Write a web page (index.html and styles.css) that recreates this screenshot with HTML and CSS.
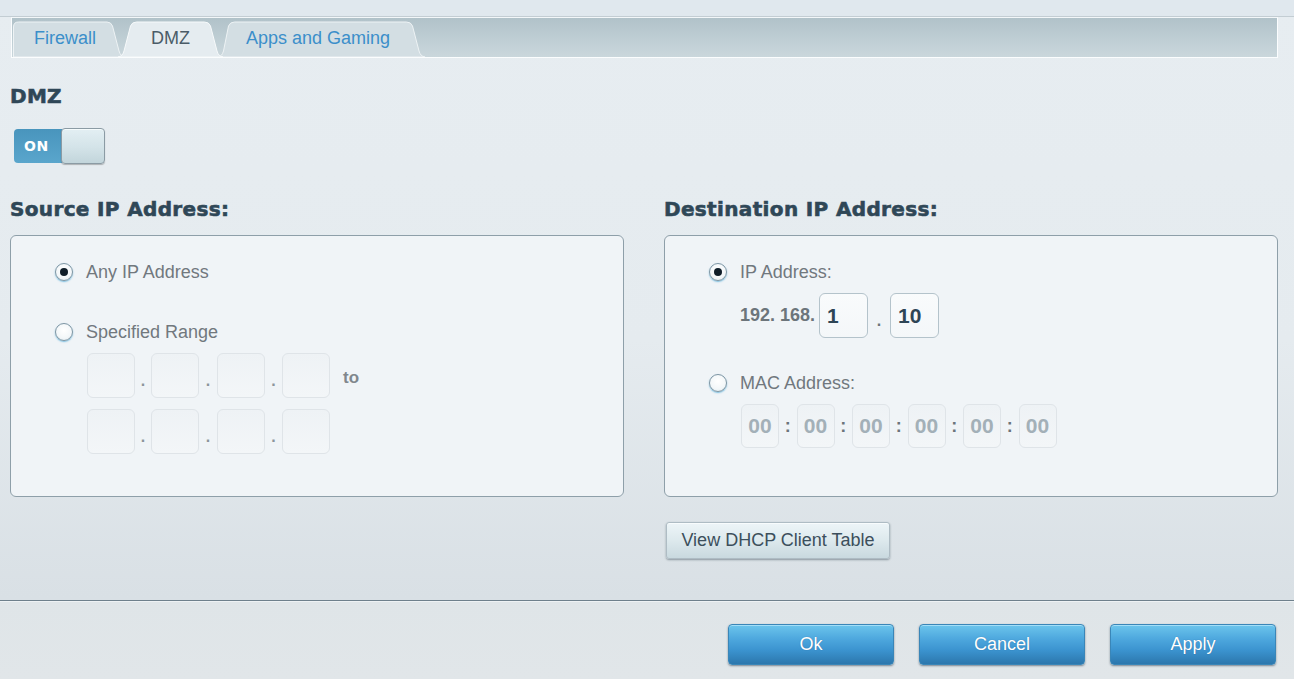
FILE: index.html
```html
<!DOCTYPE html>
<html lang="en">
<head>
<meta charset="utf-8">
<title>DMZ</title>
<link rel="stylesheet" href="styles.css">
</head>
<body>
<div class="page">
  <div class="topstrip"></div>
  <nav class="tabbar">
    <div class="tab tab-first">
      <svg class="tab-shape" viewBox="0 0 112 36" preserveAspectRatio="none"><path d="M0.5,36 V6 Q0.5,1 5.5,1 H94 Q98,1 99.5,5 L106,30 Q107.5,35.5 112,36 Z"/></svg>
      <span class="tab-label">Firewall</span>
    </div>
    <div class="tab tab-active">
      <svg class="tab-shape" viewBox="0 0 105 36" preserveAspectRatio="none"><path d="M0,36 Q4.5,35.5 6,30 L12.5,5 Q14,1 18.5,1 H86.5 Q91,1 92.5,5 L99,30 Q100.5,35.5 105,36 Z"/></svg>
      <span class="tab-label">DMZ</span>
    </div>
    <div class="tab tab-last">
      <svg class="tab-shape" viewBox="0 0 207 36" preserveAspectRatio="none"><path d="M0,36 Q4,35.5 5.5,30 L10.5,5 Q12,1 16.5,1 H188.5 Q193,1 194.5,5 L201,30 Q202.5,35.5 207,36 Z"/></svg>
      <span class="tab-label">Apps and Gaming</span>
    </div>
  </nav>

  <main class="content">
    <h1 class="title">DMZ</h1>
    <div class="toggle">
      <span class="toggle-on">ON</span>
      <span class="toggle-knob"></span>
    </div>

    <div class="columns">
      <section class="col">
        <h2 class="heading">Source IP Address:</h2>
        <div class="box">
          <label class="opt opt-first">
            <span class="radio checked"></span>
            <span class="opt-label">Any IP Address</span>
          </label>
          <label class="opt opt-range">
            <span class="radio"></span>
            <span class="opt-label">Specified Range</span>
          </label>
          <div class="range">
            <div class="range-row">
              <span class="field"></span><span class="sep">.</span>
              <span class="field"></span><span class="sep">.</span>
              <span class="field"></span><span class="sep">.</span>
              <span class="field"></span>
              <span class="to">to</span>
            </div>
            <div class="range-row">
              <span class="field"></span><span class="sep">.</span>
              <span class="field"></span><span class="sep">.</span>
              <span class="field"></span><span class="sep">.</span>
              <span class="field"></span>
            </div>
          </div>
        </div>
      </section>

      <section class="col">
        <h2 class="heading">Destination IP Address:</h2>
        <div class="box">
          <label class="opt opt-first">
            <span class="radio checked"></span>
            <span class="opt-label">IP Address:</span>
          </label>
          <div class="ip-row">
            <span class="prefix">192. 168.</span>
            <span class="field field-ip">1</span><span class="sep sep-ip">.</span>
            <span class="field field-ip">10</span>
          </div>
          <label class="opt opt-mac">
            <span class="radio"></span>
            <span class="opt-label">MAC Address:</span>
          </label>
          <div class="mac-row">
            <span class="field field-mac">00</span><span class="colon">:</span>
            <span class="field field-mac">00</span><span class="colon">:</span>
            <span class="field field-mac">00</span><span class="colon">:</span>
            <span class="field field-mac">00</span><span class="colon">:</span>
            <span class="field field-mac">00</span><span class="colon">:</span>
            <span class="field field-mac">00</span>
          </div>
        </div>
        <button class="btn-light" type="button">View DHCP Client Table</button>
      </section>
    </div>
  </main>

  <footer class="footer">
    <button class="btn-blue" type="button">Ok</button>
    <button class="btn-blue" type="button">Cancel</button>
    <button class="btn-blue" type="button">Apply</button>
  </footer>
</div>
</body>
</html>
```

FILE: styles.css
```css
* { box-sizing: border-box; }

html, body {
  margin: 0;
  padding: 0;
}

body {
  font-family: "Liberation Sans", Arial, sans-serif;
  background: #e3e9ed;
}

.page {
  width: 1294px;
  height: 679px;
  display: flex;
  flex-direction: column;
  overflow: hidden;
  background: linear-gradient(180deg, #e7edf1 0%, #e5ebef 50%, #d9e0e5 88%);
}

.topstrip {
  height: 17px;
  background: #e0e8ee;
  border-bottom: 1px solid #c3cdd3;
  flex: none;
}

/* ---------- Tabs ---------- */
.tabbar {
  flex: none;
  height: 41px;
  margin: 0 16px 0 11px;
  border: 1px solid #fbfdfe;
  border-top: 1px solid #f3f7f9;
  background: linear-gradient(180deg, #b1c2c9 0%, #c0cfd5 60%, #cad7dc 100%);
  display: flex;
  align-items: flex-end;
  padding-left: 1px;
}

.tab {
  position: relative;
  height: 36px;
  display: flex;
  align-items: center;
  padding-bottom: 2px;
  font-size: 18px;
  color: #3b8fca;
  flex: none;
}

.tab-shape {
  position: absolute;
  inset: 0;
  width: 100%;
  height: 100%;
  z-index: 0;
}

.tab-shape path {
  fill: #d3dee3;
  stroke: #eef3f5;
  stroke-width: 1;
}

.tab-label {
  position: relative;
  z-index: 1;
}

.tab-first { width: 112px; padding-left: 21px; z-index: 1; }
.tab-active { width: 105px; margin-left: -7px; padding-left: 33px; z-index: 3; color: #4b5c68; }
.tab-last { width: 207px; margin-left: -5px; padding-left: 28px; z-index: 2; }

.tab-active .tab-shape path {
  fill: #e5ecf0;
  stroke: #f7fafb;
}

/* ---------- Content ---------- */
.content {
  flex: 1;
  padding: 26px 16px 0 10px;
}

.title {
  margin: 0;
  font-family: "DejaVu Sans", Verdana, sans-serif;
  font-weight: bold;
  font-size: 20px;
  line-height: 24px;
  letter-spacing: 0.3px;
  -webkit-text-stroke: 0.6px #2f4757;
  color: #2f4757;
}

.toggle {
  margin: 21px 0 0 4px;
  width: 91px;
  height: 34px;
  display: flex;
}

.toggle-on {
  width: 48px;
  height: 34px;
  padding-left: 10px;
  display: flex;
  align-items: center;
  background: linear-gradient(180deg, #4995bd 0%, #5aa6cc 100%);
  border-radius: 4px 0 0 4px;
  color: #fff;
  font-family: "DejaVu Sans", Verdana, sans-serif;
  font-weight: bold;
  font-size: 14px;
  letter-spacing: 0.5px;
}

.toggle-knob {
  width: 45px;
  height: 36px;
  margin: -1px 0 0 -1px;
  border: 1px solid #8b9ba4;
  border-radius: 4px;
  background: linear-gradient(180deg, #e3eff3 0%, #d3e3e8 55%, #c2d5db 100%);
  box-shadow: 0 1px 1px rgba(0, 0, 0, 0.25), inset 0 1px 0 #f5fbfc;
}

.columns {
  margin-top: 34px;
  display: flex;
  gap: 40px;
}

.col {
  width: 614px;
  display: flex;
  flex-direction: column;
}

.heading {
  margin: 0;
  font-family: "DejaVu Sans", Verdana, sans-serif;
  font-weight: bold;
  font-size: 20px;
  line-height: 24px;
  letter-spacing: 0.35px;
  -webkit-text-stroke: 0.6px #2f4757;
  color: #2f4757;
}

.box {
  margin-top: 14px;
  height: 262px;
  border: 1px solid #8e9fa9;
  border-radius: 6px;
  background: #f0f4f7;
  padding: 26px 0 0 44px;
}

.opt {
  display: flex;
  align-items: center;
  height: 20px;
}

.opt-range { margin-top: 40px; }
.opt-mac { margin-top: 35px; }

.radio {
  width: 18px;
  height: 18px;
  border-radius: 50%;
  border: 1.5px solid #7d95a3;
  background: radial-gradient(circle at 50% 40%, #ffffff 0%, #f3f7f9 60%, #dbe7ec 100%);
  box-shadow: 0 1px 1.5px rgba(80, 170, 215, 0.75);
  flex: none;
  margin-right: 13px;
  position: relative;
}

.radio.checked::after {
  content: "";
  position: absolute;
  left: 50%;
  top: 50%;
  width: 8px;
  height: 8px;
  margin: -4px 0 0 -4px;
  border-radius: 50%;
  background: #0f1d28;
}

.opt-label {
  font-size: 18px;
  color: #71787e;
}

.range {
  margin: 11px 0 0 32px;
  display: flex;
  flex-direction: column;
  gap: 11px;
}

.range-row {
  display: flex;
  align-items: center;
}

.field {
  width: 48px;
  height: 45px;
  border: 1px solid #dfe4e8;
  border-radius: 6px;
  background: linear-gradient(180deg, #eef2f5 0%, #f3f6f8 100%);
  flex: none;
}

.sep {
  width: 16px;
  text-align: center;
  font-size: 16px;
  font-weight: bold;
  color: #8c959b;
  align-self: flex-end;
  padding-bottom: 8px;
  flex: none;
}

.range-row .sep:nth-of-type(4) { width: 18px; }
.range-row .sep:nth-of-type(6) { width: 17px; }

.to {
  margin-left: 13px;
  margin-top: 5px;
  font-size: 17px;
  font-weight: bold;
  color: #80878d;
}

.ip-row {
  margin: 11px 0 0 31px;
  display: flex;
  align-items: center;
}

.prefix {
  font-size: 18px;
  font-weight: bold;
  color: #6c757b;
  margin-right: 4px;
}

.field-ip {
  width: 49px;
  height: 45px;
  border: 1px solid #b4c3cb;
  background: linear-gradient(180deg, #f9fbfc 0%, #f4f7f9 100%);
  display: flex;
  align-items: center;
  padding-left: 7px;
  font-size: 21px;
  font-weight: bold;
  color: #2e4555;
}

.sep-ip {
  width: 22px;
  color: #6c757b;
}

.mac-row {
  margin: 11px 0 0 32px;
  display: flex;
  align-items: center;
}

.field-mac {
  width: 38px;
  height: 44px;
  display: flex;
  align-items: center;
  justify-content: center;
  font-size: 21px;
  font-weight: bold;
  color: #a3b0b8;
}

.colon {
  width: 17.5px;
  text-align: center;
  font-size: 18px;
  font-weight: bold;
  color: #6c757b;
  flex: none;
}

.btn-light {
  align-self: flex-start;
  margin: 25px 0 0 2px;
  width: 224px;
  height: 37px;
  border: 1px solid #aebcc4;
  border-radius: 3px;
  background: linear-gradient(180deg, #edf5f8 0%, #dde9ed 50%, #c9d9df 100%);
  box-shadow: 0 1px 2px rgba(40, 60, 70, 0.45), inset 0 1px 0 #f8fcfd;
  font-family: "Liberation Sans", Arial, sans-serif;
  font-size: 18px;
  color: #3c4f5c;
  padding: 0;
  cursor: pointer;
}

/* ---------- Footer ---------- */
.footer {
  flex: none;
  height: 79px;
  border-top: 1px solid #6e808c;
  box-shadow: inset 0 1px 0 #eef2f4;
  background: linear-gradient(180deg, #dfe5e8 0%, #e1e6e9 100%);
  display: flex;
  justify-content: flex-end;
  align-items: flex-start;
  gap: 25px;
  padding: 23px 18px 0 0;
}

.btn-blue {
  width: 166px;
  height: 41px;
  border: 1px solid #3a86b8;
  border-radius: 4px;
  background: linear-gradient(180deg, #6cc5ec 0%, #4ea8de 35%, #3b93cf 65%, #2c77ad 100%);
  box-shadow: 0 1px 2px rgba(20, 40, 60, 0.5), inset 0 1px 0 rgba(200, 240, 255, 0.6);
  color: #fff;
  font-family: "Liberation Sans", Arial, sans-serif;
  font-size: 18px;
  text-shadow: 0 0 1px rgba(0, 40, 80, 0.4);
  padding: 0;
  cursor: pointer;
}
```
